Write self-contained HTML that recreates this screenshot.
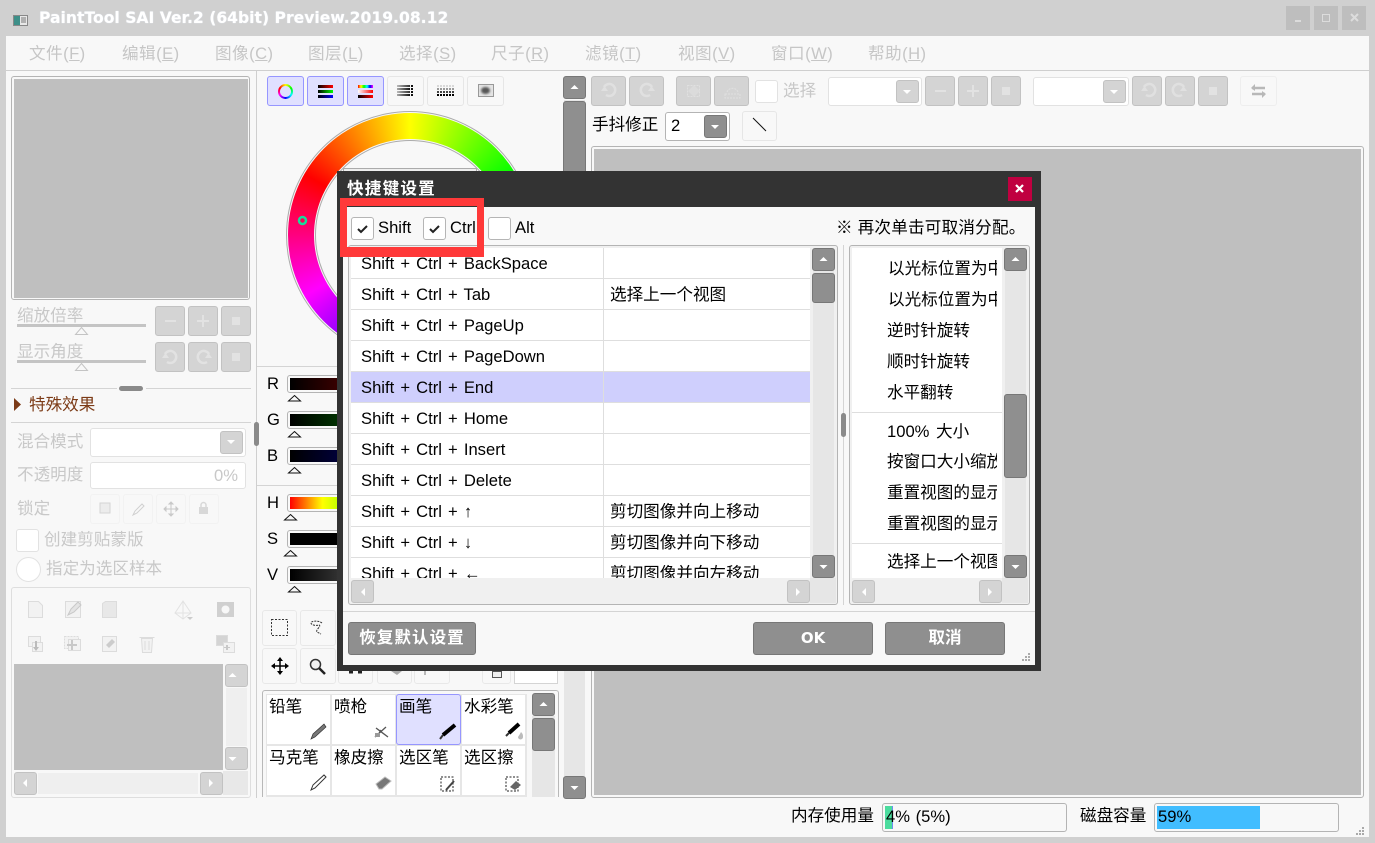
<!DOCTYPE html>
<html><head><meta charset="utf-8"><title>PaintTool SAI</title>
<style>
*{box-sizing:border-box}
html,body{margin:0;padding:0;width:1375px;height:843px;overflow:hidden;background:#d0d0d0}
body{position:relative;font:16.6px/20px "Liberation Sans","WenQuanYi Zen Hei","Noto Sans CJK SC",sans-serif;color:#000}
div,svg,span.t{position:absolute}
svg{left:0;top:0;overflow:visible}
.t{white-space:nowrap;height:20px;display:block;margin-top:1px}
.g{color:#c8c8c8}
.m{color:#c6c6c6;top:43px;font-size:16.6px;letter-spacing:.45px}
.m u{text-decoration-thickness:1px}
.bd{background:#d4d4d4;border:1px solid #c2c2c2;border-radius:3px}
.bk{background:#8f8f8f;border:1px solid #777;border-radius:3px}
.bl{background:#f8f8f8;border:1px solid #eee;border-radius:3px}
.on{background:#e0e0ff;border:1px solid #9696ff;border-radius:3px}
.in{background:#fff;border:1px solid #e2e2e2;border-radius:3px}
.ck{background:#fff;border:1px solid #b5b5b5;border-radius:3px}
.wb{background:#bebebe}
.box{border:1px solid #b4b4b4;border-radius:3px}
.cell{background:#fff;font-size:16.6px;padding:2px 0 0 2px;line-height:20px;white-space:nowrap}
.row{position:relative;height:31px;border-bottom:1px solid #dedede;background:#fff}
.row span{position:absolute;top:6px;white-space:nowrap}
.row .k{left:10px;word-spacing:1.5px}.row .v{left:259px}
.row .c{position:absolute;left:252px;top:0;width:1px;height:31px;background:#dedede}
.btn{background:#8f8f8f;border:1px solid #777;border-radius:3px;color:#fff;font-weight:bold;text-align:center;line-height:30px;font-size:16.6px}
</style></head><body>

<!-- title bar -->
<svg width="18" height="14" style="left:13px;top:15px"><rect x=".5" y=".5" width="14" height="10" fill="#e8e8e8" stroke="#888"/><rect x="1" y="1" width="6" height="9" fill="#3d8f88"/><path d="M8 3h5M8 5h5M8 7h5" stroke="#777"/></svg>
<span class="t" style="left:39px;top:7px;color:#fff;font:bold 15.6px/20px 'DejaVu Sans',sans-serif;text-shadow:0 0 1px #e8f0ff">PaintTool SAI Ver.2 (64bit) Preview.2019.08.12</span>
<div class="wb" style="left:1286px;top:6px;width:24px;height:24px"></div>
<div class="wb" style="left:1314px;top:6px;width:24px;height:24px"></div>
<div class="wb" style="left:1342px;top:6px;width:24px;height:24px"></div>
<svg width="1375" height="40"><path d="M1295 21h6" stroke="#dcdcdc" stroke-width="2"/><rect x="1322.500" y="14.500" width="7" height="7" fill="none" stroke="#dcdcdc"/><path d="M1351 14l7 7M1358 14l-7 7" stroke="#dcdcdc" stroke-width="2"/></svg>

<!-- app -->
<div style="left:6px;top:36px;width:1363px;height:801px;background:#f8f8f8"></div>
<div style="left:6px;top:70px;width:1363px;height:1px;background:#cfcfcf"></div>
<span class="t m" style="left:29px">文件(<u>F</u>)</span>
<span class="t m" style="left:122px">编辑(<u>E</u>)</span>
<span class="t m" style="left:215px">图像(<u>C</u>)</span>
<span class="t m" style="left:308px">图层(<u>L</u>)</span>
<span class="t m" style="left:399px">选择(<u>S</u>)</span>
<span class="t m" style="left:491px">尺子(<u>R</u>)</span>
<span class="t m" style="left:585px">滤镜(<u>T</u>)</span>
<span class="t m" style="left:678px">视图(<u>V</u>)</span>
<span class="t m" style="left:771px">窗口(<u>W</u>)</span>
<span class="t m" style="left:868px">帮助(<u>H</u>)</span>

<!-- left panel -->
<div style="left:256px;top:71px;width:1px;height:727px;background:#cfcfcf"></div>
<div class="box" style="left:11px;top:76px;width:239px;height:224px;background:#f8f8f8"></div>
<div style="left:14px;top:79px;width:234px;height:219px;background:#bfbfbf"></div>
<span class="t g" style="left:17px;top:305px">缩放倍率</span>
<div style="left:17px;top:324px;width:129px;height:3px;background:#c4c4c4"></div>
<span class="t g" style="left:17px;top:341px">显示角度</span>
<div style="left:17px;top:360px;width:129px;height:3px;background:#c4c4c4"></div>
<div class="bd" style="left:155px;top:306px;width:30px;height:30px"></div>
<div class="bd" style="left:188px;top:306px;width:30px;height:30px"></div>
<div class="bd" style="left:221px;top:306px;width:30px;height:30px"></div>
<div class="bd" style="left:155px;top:342px;width:30px;height:30px"></div>
<div class="bd" style="left:188px;top:342px;width:30px;height:30px"></div>
<div class="bd" style="left:221px;top:342px;width:30px;height:30px"></div>
<div style="left:11px;top:388px;width:106px;height:1px;background:#d4d4d4"></div>
<div style="left:146px;top:388px;width:105px;height:1px;background:#d4d4d4"></div>
<div style="left:119px;top:386px;width:24px;height:5px;background:#8a8a8a;border-radius:3px"></div>
<span class="t" style="left:29px;top:394px;color:#7c3b17">特殊效果</span>
<div style="left:11px;top:422px;width:240px;height:1px;background:#d4d4d4"></div>
<div style="left:254px;top:422px;width:5px;height:24px;background:#8a8a8a;border-radius:3px"></div>
<span class="t g" style="left:17px;top:431px">混合模式</span>
<div class="in" style="left:90px;top:428px;width:156px;height:29px"></div>
<div class="bd" style="left:220px;top:431px;width:23px;height:23px"></div>
<span class="t g" style="left:17px;top:464px">不透明度</span>
<div class="in" style="left:90px;top:462px;width:156px;height:27px"></div>
<span class="t g" style="left:214px;top:465px">0%</span>
<span class="t g" style="left:17px;top:498px">锁定</span>
<div class="bl" style="left:90px;top:494px;width:30px;height:30px;border-color:#f2f2f2"></div>
<div class="bl" style="left:123px;top:494px;width:30px;height:30px;border-color:#f2f2f2"></div>
<div class="bl" style="left:156px;top:494px;width:30px;height:30px;border-color:#f2f2f2"></div>
<div class="bl" style="left:189px;top:494px;width:30px;height:30px;border-color:#f2f2f2"></div>
<div class="in" style="left:16px;top:529px;width:23px;height:23px"></div>
<span class="t g" style="left:44px;top:529px">创建剪贴蒙版</span>
<div class="in" style="left:16px;top:557px;width:25px;height:25px;border-radius:50%"></div>
<span class="t g" style="left:46px;top:558px">指定为选区样本</span>
<div style="left:11px;top:587px;width:240px;height:211px;border:1px solid #dedede;border-radius:3px"></div>
<div style="left:14px;top:664px;width:209px;height:106px;background:#bfbfbf"></div>
<div style="left:226px;top:688px;width:21px;height:58px;background:#efefef"></div>
<div style="left:38px;top:773px;width:160px;height:21px;background:#efefef"></div>
<div style="left:223px;top:771px;width:25px;height:24px;background:#e8e8e8"></div>
<div class="bd" style="left:225px;top:664px;width:23px;height:23px"></div>
<div class="bd" style="left:225px;top:747px;width:23px;height:23px"></div>
<div class="bd" style="left:14px;top:772px;width:23px;height:23px"></div>
<div class="bd" style="left:200px;top:772px;width:23px;height:23px"></div>

<!-- colour panel -->
<div class="on" style="left:267px;top:76px;width:37px;height:30px"></div>
<div class="on" style="left:307px;top:76px;width:37px;height:30px"></div>
<div class="on" style="left:347px;top:76px;width:37px;height:30px"></div>
<div class="bl" style="left:387px;top:76px;width:37px;height:30px;border-color:#e6e6e6"></div>
<div class="bl" style="left:427px;top:76px;width:37px;height:30px;border-color:#e6e6e6"></div>
<div class="bl" style="left:467px;top:76px;width:37px;height:30px;border-color:#e6e6e6"></div>
<div style="left:278px;top:84px;width:15px;height:15px;border-radius:50%;background:conic-gradient(#ff0,#0f0,#0ff,#00f,#f0f,#f00,#ff0)"></div>
<div style="left:280px;top:86px;width:11px;height:11px;border-radius:50%;background:#e0e0ff"></div>
<div style="left:318px;top:85px;width:15px;height:3px;background:linear-gradient(90deg,#000,#f00)"></div>
<div style="left:318px;top:90px;width:15px;height:3px;background:linear-gradient(90deg,#000,#0f0)"></div>
<div style="left:318px;top:95px;width:15px;height:3px;background:linear-gradient(90deg,#000,#00f)"></div>
<div style="left:358px;top:85px;width:15px;height:3px;background:linear-gradient(90deg,#f00,#ff0,#0f0,#0ff,#00f,#f0f)"></div>
<div style="left:358px;top:90px;width:15px;height:3px;background:linear-gradient(90deg,#fff,#f00)"></div>
<div style="left:358px;top:95px;width:15px;height:3px;background:linear-gradient(90deg,#000,#f00)"></div>
<div style="left:397px;top:85px;width:13px;height:2px;background:linear-gradient(90deg,#bbb,#333)"></div>
<div style="left:397px;top:88px;width:13px;height:2px;background:linear-gradient(90deg,#aaa,#111)"></div>
<div style="left:397px;top:91px;width:13px;height:2px;background:linear-gradient(90deg,#bbb,#333)"></div>
<div style="left:397px;top:94px;width:13px;height:2px;background:linear-gradient(90deg,#aaa,#111)"></div>
<div style="left:478px;top:84px;width:16px;height:13px;background:#e4e4e4;border:1px solid #999"></div>
<div style="left:481px;top:87px;width:9px;height:7px;background:#555;border-radius:50%;filter:blur(1px)"></div>
<svg width="1375" height="120">
<g fill="none" stroke-width="2" stroke-dasharray="2 1"><path d="M411 86h3M411 89h3M411 92h3M411 95h3" stroke="#111"/>
<path d="M437 86h17" stroke="#d8d8d8"/><path d="M437 89h17" stroke="#999"/><path d="M437 92h17" stroke="#444"/><path d="M437 95h17" stroke="#000"/></g>
</svg>

<div style="left:286px;top:111px;width:248px;height:248px;border-radius:50%;background:#ababab"></div>
<div style="left:287px;top:112px;width:246px;height:246px;border-radius:50%;background:#f6f6f6"></div>
<div style="left:288px;top:113px;width:244px;height:244px;border-radius:50%;background:conic-gradient(#ff0,#0f0,#0ff,#00f,#f0f,#f00,#ff0)"></div>
<div style="left:314px;top:139px;width:192px;height:192px;border-radius:50%;background:#f6f6f6"></div>
<div style="left:315px;top:140px;width:190px;height:190px;border-radius:50%;background:#ababab"></div>
<div style="left:316px;top:141px;width:188px;height:188px;border-radius:50%;background:#f8f8f8"></div>
<div style="left:343px;top:168px;width:134px;height:134px;border:1px solid #ababab;background:#eee"></div>
<svg width="1375" height="843"><circle cx="302.500" cy="220.500" r="3.500" fill="#ff0050" stroke="#17dd9c" stroke-width="2.500"/></svg>

<div style="left:257px;top:366px;width:300px;height:1px;background:#d4d4d4"></div>
<div style="left:257px;top:485px;width:300px;height:1px;background:#d4d4d4"></div>
<span class="t" style="left:267px;top:373px">R</span>
<span class="t" style="left:267px;top:409px">G</span>
<span class="t" style="left:267px;top:445px">B</span>
<span class="t" style="left:267px;top:492px">H</span>
<span class="t" style="left:267px;top:528px">S</span>
<span class="t" style="left:267px;top:564px">V</span>
<div class="box" style="left:287px;top:375px;width:60px;height:18px"></div>
<div style="left:290px;top:378px;width:50px;height:12px;background:linear-gradient(90deg,#000,#3a0000)"></div>
<div class="box" style="left:287px;top:411px;width:60px;height:18px"></div>
<div style="left:290px;top:414px;width:50px;height:12px;background:linear-gradient(90deg,#000,#003300)"></div>
<div class="box" style="left:287px;top:447px;width:60px;height:18px"></div>
<div style="left:290px;top:450px;width:50px;height:12px;background:linear-gradient(90deg,#000,#00003a)"></div>
<div class="box" style="left:287px;top:494px;width:60px;height:18px"></div>
<div style="left:290px;top:497px;width:50px;height:12px;background:linear-gradient(90deg,#f00,#f80 35%,#ff0 65%,#bf0)"></div>
<div class="box" style="left:287px;top:530px;width:60px;height:18px"></div>
<div style="left:290px;top:533px;width:50px;height:12px;background:#000"></div>
<div class="box" style="left:287px;top:566px;width:60px;height:18px"></div>
<div style="left:290px;top:569px;width:50px;height:12px;background:linear-gradient(90deg,#000,#333)"></div>

<!-- tool buttons -->
<div class="bl" style="left:262px;top:610px;width:35px;height:36px;border-color:#e8e8e8"></div>
<div class="bl" style="left:300px;top:610px;width:36px;height:36px;border-color:#e8e8e8"></div>
<div class="bl" style="left:262px;top:648px;width:35px;height:36px;border-color:#e8e8e8"></div>
<div class="bl" style="left:300px;top:648px;width:36px;height:36px;border-color:#e8e8e8"></div>
<div class="bl" style="left:338px;top:648px;width:35px;height:36px;border-color:#e8e8e8"></div>
<div class="bl" style="left:377px;top:648px;width:35px;height:36px;border-color:#e8e8e8"></div>
<div class="bl" style="left:414px;top:648px;width:36px;height:36px;border-color:#e8e8e8"></div>
<div class="bl" style="left:482px;top:648px;width:29px;height:36px;border-color:#e8e8e8"></div>
<div style="left:514px;top:640px;width:44px;height:44px;background:#fff;border:1px solid #d4d4d4"></div>
<svg width="1375" height="843">
<path d="M349 672h4M358 672h4" stroke="#222" stroke-width="3"/>
<path d="M391 671h11l-5 4z" fill="#aaa"/>
<path d="M425 671v4" stroke="#777"/>
<rect x="492.500" y="671.500" width="9" height="6" fill="#eee" stroke="#555"/>
</svg>

<!-- brush list -->
<div style="left:262px;top:690px;width:297px;height:107px;border:1px solid #b8b8b8;border-bottom:0;border-radius:3px 3px 0 0;background:#f8f8f8"></div>
<div style="left:266px;top:694px;width:261px;height:103px;background:#e6e6e6"></div>
<div class="cell" style="left:267px;top:695px;width:63px;height:49px">铅笔</div>
<div class="cell" style="left:332px;top:695px;width:63px;height:49px">喷枪</div>
<div class="cell" style="left:397px;top:695px;width:63px;height:49px;background:#e0e0ff;outline:1px solid #9696ff;border-radius:2px">画笔</div>
<div class="cell" style="left:462px;top:695px;width:63px;height:49px">水彩笔</div>
<div class="cell" style="left:267px;top:746px;width:63px;height:49px">马克笔</div>
<div class="cell" style="left:332px;top:746px;width:63px;height:49px">橡皮擦</div>
<div class="cell" style="left:397px;top:746px;width:63px;height:49px">选区笔</div>
<div class="cell" style="left:462px;top:746px;width:63px;height:49px">选区擦</div>
<div style="left:532px;top:716px;width:23px;height:81px;background:#e6e6e6"></div>
<div class="bk" style="left:532px;top:693px;width:23px;height:23px"></div>
<div class="bk" style="left:532px;top:718px;width:23px;height:33px"></div>

<!-- centre scrollbar -->
<div style="left:564px;top:100px;width:21px;height:676px;background:#e6e6e6"></div>
<div class="bk" style="left:563px;top:76px;width:23px;height:23px"></div>
<div class="bk" style="left:563px;top:101px;width:23px;height:90px"></div>
<div class="bk" style="left:563px;top:776px;width:23px;height:23px"></div>

<!-- top toolbar -->
<div class="bd" style="left:591px;top:76px;width:35px;height:30px"></div>
<div class="bd" style="left:629px;top:76px;width:35px;height:30px"></div>
<div class="bd" style="left:676px;top:76px;width:35px;height:30px"></div>
<div class="bd" style="left:714px;top:76px;width:35px;height:30px"></div>
<div class="in" style="left:755px;top:80px;width:23px;height:23px"></div>
<span class="t g" style="left:783px;top:80px">选择</span>
<div class="in" style="left:828px;top:77px;width:94px;height:29px"></div>
<div class="bd" style="left:896px;top:80px;width:23px;height:23px"></div>
<div class="bd" style="left:925px;top:76px;width:30px;height:30px"></div>
<div class="bd" style="left:958px;top:76px;width:30px;height:30px"></div>
<div class="bd" style="left:991px;top:76px;width:30px;height:30px"></div>
<div class="in" style="left:1033px;top:77px;width:96px;height:29px"></div>
<div class="bd" style="left:1103px;top:80px;width:23px;height:23px"></div>
<div class="bd" style="left:1132px;top:76px;width:30px;height:30px"></div>
<div class="bd" style="left:1165px;top:76px;width:30px;height:30px"></div>
<div class="bd" style="left:1198px;top:76px;width:30px;height:30px"></div>
<div class="bl" style="left:1240px;top:76px;width:37px;height:30px"></div>
<span class="t" style="left:592px;top:114px">手抖修正</span>
<div class="box" style="left:665px;top:112px;width:65px;height:29px;background:#fff"></div>
<span class="t" style="left:671px;top:115px">2</span>
<div class="bk" style="left:704px;top:115px;width:23px;height:23px"></div>
<div class="bl" style="left:742px;top:111px;width:35px;height:30px;border-color:#e6e6e6"></div>

<!-- canvas -->
<div class="box" style="left:591px;top:146px;width:773px;height:652px;background:#f8f8f8"></div>
<div style="left:594px;top:149px;width:767px;height:646px;background:#bfbfbf"></div>

<!-- status bar -->
<span class="t" style="left:791px;top:805px">内存使用量</span>
<div class="box" style="left:882px;top:803px;width:185px;height:29px;background:#f8f8f8"></div>
<div style="left:885px;top:806px;width:7px;height:23px;background:#4bdc9e"></div>
<div style="left:892px;top:806px;width:1px;height:23px;background:#6f8cf0"></div>
<span class="t" style="left:886px;top:806px;word-spacing:1px">4% (5%)</span>
<span class="t" style="left:1080px;top:805px">磁盘容量</span>
<div class="box" style="left:1154px;top:803px;width:185px;height:29px;background:#f8f8f8"></div>
<div style="left:1157px;top:806px;width:103px;height:23px;background:#41bdff"></div>
<span class="t" style="left:1158px;top:806px">59%</span>

<!-- icons below the dialog -->
<svg width="1375" height="843">
<g fill="#f8f8f8" stroke="#c4c4c4" stroke-width="1"><path d="M81.500 327.500l6 7h-12z"/><path d="M81.500 363.500l6 7h-12z"/></g>
<g fill="#f8f8f8" stroke="#111" stroke-width="1"><path d="M294.500 395.500l6 5.500h-12z"/><path d="M294.500 431.500l6 5.500h-12z"/><path d="M294.500 467.500l6 5.500h-12z"/><path d="M290.500 514.500l6 5.500h-12z"/><path d="M290.500 550.500l6 5.500h-12z"/><path d="M294.500 586.500l6 5.500h-12z"/></g>
<path d="M14 398l7 6.500-7 6.500z" fill="#7c3b17"/>
<!-- left buttons glyphs -->
<g fill="#e2e2e2"><rect x="165" y="320" width="11" height="2"/><path d="M202 315h2v5h5v2h-5v5h-2v-5h-5v-2h5z"/><rect x="232" y="317" width="8" height="8"/><rect x="232" y="353" width="8" height="8"/></g>
<g fill="none" stroke="#e2e2e2" stroke-width="2.500"><path d="M165 354a6 6 0 1 1 2 8"/><path d="M209 354a6 6 0 1 0-2 8"/></g>
<g fill="#e2e2e2"><path d="M162 358h7l-3.500-5z"/><path d="M212 358h-7l3.500-5z"/></g>
<!-- arrows -->
<g fill="#fff"><path d="M227 440h8l-4 4z"/><path d="M903 90h8l-4 4z"/><path d="M1110 90h8l-4 4z"/><path d="M711 125h8l-4 4z"/><path d="M232.500 673l4 4h-8z"/><path d="M228.500 757h8l-4 4z"/><path d="M27 779v8l-4-4z"/><path d="M209 779v8l4-4z"/><path d="M543.500 702l4 4h-8z"/><path d="M574.500 85l4 4h-8z"/><path d="M570.500 786h8l-4 4z"/></g>
<!-- lock row -->
<rect x="100" y="503" width="10" height="10" fill="#ececec" stroke="#d4d4d4"/>
<path d="M133 515l2-4 7-7 2 2-7 7z" fill="none" stroke="#d0d0d0"/>
<path d="M171 502v14M164 509h14M171 502l-2 2h4zM171 516l-2-2h4zM164 509l2-2v4zM178 509l-2-2v4z" stroke="#c8c8c8" fill="none"/>
<rect x="199" y="507" width="9" height="7" fill="#d8d8d8"/><path d="M201 507v-2a2.500 2.500 0 0 1 5 0v2" fill="none" stroke="#d8d8d8" stroke-width="1.500"/>
<!-- layer panel icons -->
<g fill="#f2f2f2" stroke="#dcdcdc">
<path d="M28.500 601.500h10l4 4v12h-14z"/><rect x="65.500" y="601.500" width="15" height="16"/><path d="M102.500 603.500l3-2h11v16h-14z" fill="#e8e8e8"/>
<rect x="28.500" y="636.500" width="12" height="10"/><rect x="32.500" y="642.500" width="10" height="9"/>
<rect x="64.500" y="636.500" width="14" height="12" stroke-dasharray="2 1"/><rect x="68.500" y="639.500" width="12" height="11"/>
<rect x="102.500" y="636.500" width="14" height="15"/>
<path d="M141.500 638.500h11l-1 14h-9z"/><path d="M139.500 637.500h15M145 641v9M149 641v9"/>
<rect x="216.500" y="635.500" width="11" height="10" fill="#d4d4d4"/><rect x="223.500" y="642.500" width="11" height="10"/>
</g>
<path d="M68 615l3-6 7-7 3 3-7 7z" fill="#e4e4e4" stroke="#c8c8c8"/>
<rect x="217" y="602" width="17" height="15" fill="#d0d0d0"/><circle cx="225.500" cy="609.500" r="4" fill="#f8f8f8"/>
<path d="M183 601l-8 12 8 6 8-6zM175 613h16M183 601v18" stroke="#e2e2e2" fill="none"/><path d="M187 617h6l-3 3z" fill="#ccc"/>
<path d="M71 640h2v4h4v2h-4v4h-2v-4h-4v-2h4z" fill="#c8c8c8"/>
<path d="M226 645h2v2h2v1h-2v2h-2v-2h-2v-1h2z" fill="#c8c8c8"/>
<path d="M35 641v6h-2l3 4 3-4h-2v-6z" fill="#bbb"/>
<path d="M106 645l6-6 3 3-6 6z" fill="#ccc"/>
<!-- tool icons -->
<rect x="271.500" y="619.500" width="16" height="16" fill="none" stroke="#333" stroke-dasharray="2 1.500"/>
<path d="M322 623c-4-3-11-2-11 0s5 3 8 2c3 1-4 5-2 7l4 2" fill="none" stroke="#333" stroke-dasharray="2 1"/>
<path d="M280 659v14M273 666h14" stroke="#000" stroke-width="1.500"/><path d="M280 657l-3 4h6zM280 675l-3-4h6zM271 666l4-3v6zM289 666l-4-3v6z" fill="#000"/>
<circle cx="315.500" cy="664.500" r="5" fill="#f0f0f0" stroke="#333" stroke-width="1.500"/><path d="M319 668l6 6" stroke="#222" stroke-width="2.500"/>
<!-- brush icons -->
<path d="M311 739l2-5 11-10 2 3-11 10z" fill="#777" stroke="#333" stroke-width=".7"/>
<path d="M375 737l11-10M376 728l12 9M378 735l3-5" stroke="#555" fill="none" stroke-width="1.300"/><rect x="375" y="733" width="5" height="4" fill="#999"/>
<path d="M440 739l3-4" stroke="#333" stroke-width="2"/><path d="M443 735l12-10" stroke="#000" stroke-width="4"/>
<path d="M506 736l3-3" stroke="#333" stroke-width="2"/><path d="M509 733l10-9" stroke="#000" stroke-width="4"/><path d="M518 737c2-3 2-3 3-5 2 2 2 3 2 5a2.500 2.500 0 0 1-5 0z" fill="#bbb"/>
<path d="M311 790l2-5 11-10 2 2-11 11z" fill="#fff" stroke="#333"/>
<path d="M376 784l9-7 6 4-9 8h-3z" fill="#777" stroke="#bbb"/>
<rect x="441" y="777" width="12" height="14" fill="none" stroke="#222" stroke-dasharray="2 1.500"/><path d="M446 790l8-9" stroke="#444" stroke-width="2"/>
<rect x="506" y="777" width="12" height="14" fill="none" stroke="#222" stroke-dasharray="2 1.500"/><path d="M510 787l6-6 5 4-6 5z" fill="#666"/>
<!-- disabled toolbar -->
<g fill="none" stroke="#e0e0e0" stroke-width="2.500"><path d="M604 87a6 6 0 1 1 2 8"/><path d="M652 87a6 6 0 1 0-2 8"/><path d="M1144 87a6 6 0 1 1 2 8"/><path d="M1184 87a6 6 0 1 0-2 8"/></g>
<g fill="#e0e0e0"><path d="M601 91h7l-3.500-5z"/><path d="M655 91h-7l3.500-5z"/><path d="M1141 91h7l-3.500-5z"/><path d="M1187 91h-7l3.500-5z"/></g>
<g fill="none" stroke="#e0e0e0"><rect x="687.500" y="85.500" width="12" height="11" stroke-dasharray="2 1"/><path d="M727 92c2-5 9-5 11 0M725 94h15v4h-15z" stroke-dasharray="2 1"/></g>
<path d="M688 91l6-6 6 6-6 6z" fill="#e0e0e0" opacity=".6"/>
<g fill="#e2e2e2"><rect x="935" y="90" width="11" height="2"/><path d="M972 85h2v5h5v2h-5v5h-2v-5h-5v-2h5z"/><rect x="1002" y="87" width="8" height="8"/><rect x="1209" y="87" width="8" height="8"/></g>
<path d="M1252 88h13M1252 94h13" stroke="#b8b8b8" stroke-width="2.500"/><path d="M1255 84l-4 4 4 3zM1262 91l4 3-4 4z" fill="#b8b8b8"/>
<path d="M753 118l13 13" stroke="#111"/>
<g fill="#aaa"><rect x="1362" y="827" width="2" height="2"/><rect x="1359" y="830" width="2" height="2"/><rect x="1362" y="830" width="2" height="2"/><rect x="1356" y="833" width="2" height="2"/><rect x="1359" y="833" width="2" height="2"/><rect x="1362" y="833" width="2" height="2"/></g>
</svg>

<!-- DIALOG -->
<div style="left:337px;top:171px;width:704px;height:500px;background:#333"></div>
<div style="left:343px;top:207px;width:692px;height:458px;background:#f8f8f8"></div>
<span class="t" style="left:347px;top:178px;color:#fff;font-weight:bold;letter-spacing:1.200px">快捷键设置</span>
<div style="left:1008px;top:177px;width:24px;height:24px;background:#c00040"></div>
<svg width="1375" height="843"><path d="M1016 185l7 7M1023 185l-7 7" stroke="#fff" stroke-width="2.200"/></svg>

<div class="ck" style="left:351px;top:217px;width:23px;height:23px"></div>
<span class="t" style="left:378px;top:217px">Shift</span>
<div class="ck" style="left:423px;top:217px;width:23px;height:23px"></div>
<span class="t" style="left:450px;top:217px">Ctrl</span>
<div class="ck" style="left:488px;top:217px;width:23px;height:23px"></div>
<span class="t" style="left:515px;top:217px">Alt</span>
<span class="t" style="left:836px;top:217px;letter-spacing:.2px">※ 再次单击可取消分配。</span>

<!-- table -->
<div class="box" style="left:348px;top:245px;width:490px;height:360px;background:#f0f0f0"></div>
<div style="left:351px;top:248px;width:459px;height:330px;overflow:hidden;background:#fff">
<div class="row"><span class="k">Shift + Ctrl + BackSpace</span><i class="c"></i></div>
<div class="row"><span class="k">Shift + Ctrl + Tab</span><i class="c"></i><span class="v">选择上一个视图</span></div>
<div class="row"><span class="k">Shift + Ctrl + PageUp</span><i class="c"></i></div>
<div class="row"><span class="k">Shift + Ctrl + PageDown</span><i class="c"></i></div>
<div class="row" style="background:#cfcffd"><span class="k">Shift + Ctrl + End</span><i class="c"></i></div>
<div class="row"><span class="k">Shift + Ctrl + Home</span><i class="c"></i></div>
<div class="row"><span class="k">Shift + Ctrl + Insert</span><i class="c"></i></div>
<div class="row"><span class="k">Shift + Ctrl + Delete</span><i class="c"></i></div>
<div class="row"><span class="k">Shift + Ctrl + ↑</span><i class="c"></i><span class="v">剪切图像并向上移动</span></div>
<div class="row"><span class="k">Shift + Ctrl + ↓</span><i class="c"></i><span class="v">剪切图像并向下移动</span></div>
<div class="row"><span class="k">Shift + Ctrl + ←</span><i class="c"></i><span class="v">剪切图像并向左移动</span></div>
</div>
<div style="left:813px;top:271px;width:21px;height:284px;background:#e6e6e6"></div>
<div class="bk" style="left:812px;top:248px;width:23px;height:23px"></div>
<div class="bk" style="left:812px;top:273px;width:23px;height:30px"></div>
<div class="bk" style="left:812px;top:555px;width:23px;height:23px"></div>
<div style="left:810px;top:578px;width:26px;height:25px;background:#e6e6e6"></div>
<div class="bd" style="left:351px;top:580px;width:23px;height:23px"></div>
<div class="bd" style="left:787px;top:580px;width:23px;height:23px"></div>

<!-- divider -->
<div style="left:843px;top:245px;width:1px;height:360px;background:#d4d4d4"></div>
<div style="left:841px;top:413px;width:5px;height:24px;background:#8a8a8a;border-radius:3px"></div>

<!-- right pane -->
<div class="box" style="left:849px;top:245px;width:181px;height:360px;background:#f0f0f0"></div>
<div style="left:852px;top:248px;width:150px;height:330px;background:#fff"></div>
<div style="left:852px;top:248px;width:145px;height:330px;overflow:hidden">
<span class="t" style="left:36px;top:10px">以光标位置为中心放大</span>
<span class="t" style="left:36px;top:41px">以光标位置为中心缩小</span>
<span class="t" style="left:35px;top:72px">逆时针旋转</span>
<span class="t" style="left:35px;top:103px">顺时针旋转</span>
<span class="t" style="left:35px;top:134px">水平翻转</span>
<span class="t" style="left:35px;top:173px;word-spacing:2px">100% 大小</span>
<span class="t" style="left:35px;top:203px">按窗口大小缩放</span>
<span class="t" style="left:35px;top:234px">重置视图的显示位置</span>
<span class="t" style="left:35px;top:265px">重置视图的显示角度</span>
<span class="t" style="left:35px;top:303px">选择上一个视图</span>
</div>
<div style="left:852px;top:412px;width:150px;height:1px;background:#dedede"></div>
<div style="left:852px;top:543px;width:150px;height:1px;background:#dedede"></div>
<div style="left:1005px;top:271px;width:21px;height:284px;background:#e6e6e6"></div>
<div class="bk" style="left:1004px;top:248px;width:23px;height:23px"></div>
<div class="bk" style="left:1004px;top:394px;width:23px;height:84px"></div>
<div class="bk" style="left:1004px;top:555px;width:23px;height:23px"></div>
<div style="left:1002px;top:578px;width:26px;height:25px;background:#e6e6e6"></div>
<div class="bd" style="left:852px;top:580px;width:23px;height:23px"></div>
<div class="bd" style="left:979px;top:580px;width:23px;height:23px"></div>

<!-- footer -->
<div style="left:343px;top:611px;width:692px;height:1px;background:#d4d4d4"></div>
<div class="btn" style="left:348px;top:622px;width:128px;height:33px;letter-spacing:1px">恢复默认设置</div>
<div class="btn" style="left:753px;top:622px;width:120px;height:33px;font-family:'DejaVu Sans',sans-serif;font-size:15px">OK</div>
<div class="btn" style="left:885px;top:622px;width:120px;height:33px">取消</div>

<!-- red annotation -->
<div style="left:340px;top:198px;width:144px;height:59px;border:solid #ff3939;border-width:8px 7px 10px 7px"></div>

<svg width="1375" height="843">
<g fill="#fff"><path d="M823.500 257l4 4h-8z"/><path d="M819.500 565h8l-4 4z"/><path d="M1015.500 257l4 4h-8z"/><path d="M1011.500 565h8l-4 4z"/><path d="M365 588v8l-4-4z"/><path d="M796 588v8l4-4z"/><path d="M866 588v8l-4-4z"/><path d="M988 588v8l4-4z"/></g>
<g fill="none" stroke="#222" stroke-width="2"><path d="M358 229l3 3 6-6"/><path d="M430 229l3 3 6-6"/></g>
<g fill="#aaa"><rect x="1028" y="653" width="2" height="2"/><rect x="1025" y="656" width="2" height="2"/><rect x="1028" y="656" width="2" height="2"/><rect x="1022" y="659" width="2" height="2"/><rect x="1025" y="659" width="2" height="2"/><rect x="1028" y="659" width="2" height="2"/></g>
</svg>
</body></html>
